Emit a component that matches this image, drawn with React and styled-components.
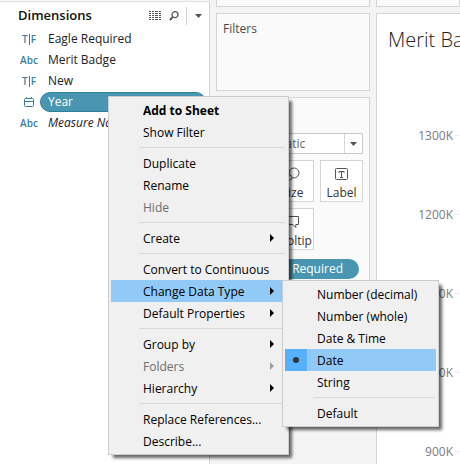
import React from 'react';
import styled, { createGlobalStyle, css } from 'styled-components';

const GlobalStyle = createGlobalStyle`
  * { box-sizing: border-box; }
  body {
    margin: 0;
    background: #f4f4f4;
    color: #333;
    font-family: "Open Sans", "Noto Sans", sans-serif;
    font-size: 12px;
  }
  button, select { font: inherit; color: inherit; }
`;

const Workspace = styled.div`
  position: relative;
  display: grid;
  grid-template-columns: 210px 154px minmax(0, 1fr);
  column-gap: 6px;
  min-height: 100vh;
  overflow: hidden;
`;

const DataPane = styled.aside`
  margin-top: 1px;
  background: #fff;
  border-top: 1px solid #e0e0e0;
  border-right: 1px solid #d4d4d4;
`;

const PaneHeader = styled.header`
  display: flex;
  align-items: center;
  height: 27px;
  padding: 0 7px 0 18px;
`;

const PaneTitle = styled.h2`
  flex: 1;
  margin: 0;
  padding-bottom: 2px;
  font: 600 13px/20px "Open Sans", sans-serif;
  color: #111;
`;

const ToolButton = styled.button`
  display: flex;
  padding: 0;
  border: 0;
  background: none;
  margin-left: ${(p) => p.$gap || 0}px;
`;

const ToolDivider = styled.span`
  width: 1px;
  height: 18px;
  margin-left: 7px;
  background: #d4d4d4;
`;

const FieldList = styled.ul`
  margin: 0;
  padding: 0;
  list-style: none;
`;

const FieldRow = styled.li`
  display: flex;
  align-items: flex-start;
  height: 21px;
  padding-right: 3px;
`;

const TypeMark = styled.span`
  flex: none;
  display: flex;
  align-items: center;
  justify-content: center;
  width: 40px;
  height: 20px;
  padding-left: 18px;
  font: 600 10px/20px "Open Sans", sans-serif;
  color: #3c7f9c;
`;

const TypeBar = styled.span`
  width: 1px;
  height: 11px;
  margin: 0 1px;
  background: #3c7f9c;
`;

const FieldName = styled.button`
  flex: 1;
  height: 20px;
  padding: 0 7px 1px;
  border: 1px solid transparent;
  border-radius: 10px;
  background: none;
  color: #222;
  line-height: 17px;
  text-align: left;
  white-space: nowrap;
  font-style: ${(p) => (p.$italic ? 'italic' : 'normal')};
  ${(p) => p.$selected && css`
    background: #4996b2;
    border-color: #2f7f9f;
    color: #fff;
  `}
`;

const ShelfColumn = styled.div`
  display: flex;
  flex-direction: column;
  gap: 6px;
`;

const Shelf = styled.section`
  height: 78px;
  padding: 4px 6px;
  border: 1px solid #d4d4d4;
  background: #fafafa;
`;

const ShelfEdge = styled.section`
  height: 7px;
  border: 1px solid #d4d4d4;
  border-top: 0;
  background: #fafafa;
`;

const ShelfTitle = styled.h3`
  margin: 0;
  font: 400 12px/22px "Open Sans", sans-serif;
  color: #4a4a4a;
`;

const MarksCard = styled.section`
  height: 300px;
  padding: 4px 6px 4px 5px;
  border: 1px solid #d4d4d4;
  background: #fafafa;
`;

const MarkType = styled.div`
  display: flex;
  align-items: center;
  height: 21px;
  margin-top: 9px;
  border: 1px solid #c8c8c8;
  border-radius: 1px;
  background: #fff;
`;

const MarkSelect = styled.select`
  flex: 1;
  min-width: 0;
  height: 19px;
  padding: 0 0 0 25px;
  border: 0;
  appearance: none;
  background: none;
  color: #666;
`;

const MarkArrow = styled.span`
  display: flex;
  align-items: center;
  justify-content: center;
  width: 18px;
  height: 19px;
  border-left: 1px solid #d9d9d9;
`;

const MarkGrid = styled.div`
  display: grid;
  grid-template-columns: repeat(3, 1fr);
  gap: 6px;
  margin-top: 6px;
`;

const MarkButton = styled.button`
  display: flex;
  flex-direction: column;
  align-items: center;
  justify-content: space-between;
  height: 42px;
  padding: 6px 0 0;
  border: 1px solid #d4d4d4;
  background: #fff;
  line-height: 16px;
  color: #333;
`;

const MarkPill = styled.button`
  display: block;
  width: 137px;
  height: 20px;
  margin-top: 9px;
  padding: 0 16px;
  border: 0;
  border-radius: 10px;
  background: #4996b2;
  color: #fff;
  line-height: 20px;
  text-align: right;
  white-space: nowrap;
`;

const SheetColumn = styled.main`
  display: flex;
  flex-direction: column;
  gap: 6px;
`;

const Sheet = styled.section`
  flex: 1;
  border: 1px solid #d4d4d4;
  border-width: 1px 0 0 1px;
  background: #fff;
  overflow: hidden;
`;

const SheetTitle = styled.h1`
  margin: 0;
  padding: 11px 0 0 11px;
  font: 300 20px/30px "Open Sans", sans-serif;
  color: #222;
  white-space: nowrap;
`;

const Axis = styled.div`
  display: flex;
  flex-direction: column;
  gap: 57px;
  margin-top: 69px;
`;

const Tick = styled.div`
  display: flex;
  align-items: center;
  height: 22px;
  color: #7b7b7b;

  span {
    width: 76px;
    text-align: right;
  }

  &::after {
    content: "";
    flex: 1;
    height: 1px;
    margin-left: 2px;
    background: #ececec;
  }
`;

const Menu = styled.div`
  position: absolute;
  left: ${(p) => p.$x}px;
  top: ${(p) => p.$y}px;
  width: ${(p) => p.$width}px;
  padding: 2px;
  border: 1px solid #ccc;
  background: #f0f0f0;
  box-shadow: 4px 4px 3px -1px rgba(0, 0, 0, 0.6);
`;

const MenuItem = styled.button`
  display: flex;
  align-items: center;
  width: 100%;
  height: 22px;
  padding: 0 12px 0 0;
  border: 0;
  background: ${(p) => (p.$active ? '#91c9f7' : 'none')};
  color: #000;
  font-size: 12px;
  font-weight: ${(p) => (p.$bold ? 700 : 400)};
  line-height: 20px;
  text-align: left;
  white-space: nowrap;

  &:disabled { color: #6d6d6d; }
  &:disabled svg { color: #a0a0a0; }
`;

const MenuLabel = styled.span`
  flex: 1;
  padding: 2px 0 0 ${(p) => p.$indent}px;
`;

const RadioGutter = styled.span`
  display: flex;
  align-items: center;
  justify-content: center;
  width: 22px;
  height: 22px;
  background: ${(p) => (p.$checked ? '#56b0fa' : 'none')};
`;

const MenuRule = styled.hr`
  height: 1px;
  margin: 4px 1px 4px 28px;
  border: 0;
  background: #d7d7d7;
`;

const ListIcon = () => (
  <svg width="12" height="9" viewBox="0 0 12 9" stroke="#555" shapeRendering="crispEdges" aria-hidden="true">
    {[0.5, 2.5, 4.5, 6.5, 8.5].map((y) => (
      <path key={y} d={`M0 ${y}h2M3 ${y}h2M6 ${y}h3M10 ${y}h2`} />
    ))}
  </svg>
);

const SearchIcon = () => (
  <svg width="10" height="10" viewBox="0 0 10 10" fill="none" stroke="#555" aria-hidden="true">
    <circle cx="6" cy="3.7" r="3" strokeWidth="1.2" />
    <path d="M3.8 6 .8 9" strokeWidth="1.8" />
  </svg>
);

const DownArrow = () => (
  <svg width="7" height="4" viewBox="0 0 7 4" fill="#555" aria-hidden="true"><path d="M0 0h7L3.5 4z" /></svg>
);

const SubmenuArrow = () => (
  <svg width="4" height="8" viewBox="0 0 4 8" fill="currentColor" aria-hidden="true"><path d="M0 0 4 4 0 8z" /></svg>
);

const CalendarIcon = () => (
  <svg width="10" height="10" viewBox="0 0 10 10" fill="none" stroke="#3c7f9c" aria-hidden="true">
    <rect x=".5" y="1.5" width="9" height="8" rx="1" />
    <path d="M0 4.5h10M2.5 0v2M7.5 0v2" />
  </svg>
);

const Dot = () => (
  <svg width="6" height="6" viewBox="0 0 6 6" fill="#333" aria-hidden="true"><circle cx="3" cy="3" r="3" /></svg>
);

const markIcons = {
  Color: (
    <g fill="#777" stroke="none">
      <circle cx="4" cy="4" r="2.5" /><circle cx="10" cy="4" r="2.5" />
      <circle cx="4" cy="10" r="2.5" /><circle cx="10" cy="10" r="2.5" />
    </g>
  ),
  Size: (
    <g>
      <circle cx="8" cy="6" r="5" />
      <circle cx="3.5" cy="10.5" r="2.5" fill="#fff" />
    </g>
  ),
  Label: (
    <g>
      <rect x=".5" y="1.5" width="12" height="11" rx="1" />
      <path d="M4 6V4.5h5V6M6.5 4.5v6M5 10.5h3" />
    </g>
  ),
  Detail: (
    <g>
      <circle cx="4" cy="4" r="2.5" /><circle cx="10" cy="4" r="2.5" />
      <circle cx="7" cy="10" r="2.5" />
    </g>
  ),
  Tooltip: <path d="M.5 1.5h12v8H9.8v3l-3-3H.5z" />,
};

const MarkIcon = ({ name }) => (
  <svg width="14" height="14" viewBox="0 0 14 14" fill="none" stroke="#555" aria-hidden="true">{markIcons[name]}</svg>
);

const BooleanMark = () => <>T<TypeBar />F</>;

const fields = [
  { name: 'Eagle Required', mark: <BooleanMark /> },
  { name: 'Merit Badge', mark: 'Abc' },
  { name: 'New', mark: <BooleanMark /> },
  { name: 'Year', mark: <CalendarIcon />, selected: true },
  { name: 'Measure Names', mark: 'Abc', italic: true },
];

const actions = [
  { label: 'Add to Sheet', bold: true },
  { label: 'Show Filter' },
  null,
  { label: 'Duplicate' },
  { label: 'Rename' },
  { label: 'Hide', disabled: true },
  null,
  { label: 'Create', more: true },
  null,
  { label: 'Convert to Continuous' },
  { label: 'Change Data Type', more: true, active: true },
  { label: 'Default Properties', more: true },
  null,
  { label: 'Group by', more: true },
  { label: 'Folders', more: true, disabled: true },
  { label: 'Hierarchy', more: true },
  null,
  { label: 'Replace References...' },
  { label: 'Describe...' },
];

const dataTypes = ['Number (decimal)', 'Number (whole)', 'Date & Time', 'Date', 'String', null, 'Default'];
const currentType = 'Date';

export default function App() {
  return (
    <>
      <GlobalStyle />
      <Workspace>
        <DataPane>
          <PaneHeader>
            <PaneTitle>Dimensions</PaneTitle>
            <ToolButton aria-label="View as list"><ListIcon /></ToolButton>
            <ToolButton aria-label="Find field" $gap={8}><SearchIcon /></ToolButton>
            <ToolDivider />
            <ToolButton aria-label="Pane menu" $gap={8}><DownArrow /></ToolButton>
          </PaneHeader>
          <FieldList>
            {fields.map((f) => (
              <FieldRow key={f.name}>
                <TypeMark>{f.mark}</TypeMark>
                <FieldName $selected={f.selected} $italic={f.italic}>{f.name}</FieldName>
              </FieldRow>
            ))}
          </FieldList>
        </DataPane>

        <ShelfColumn>
          <ShelfEdge aria-label="Pages" />
          <Shelf><ShelfTitle>Filters</ShelfTitle></Shelf>
          <MarksCard>
            <ShelfTitle>Marks</ShelfTitle>
            <MarkType>
              <MarkSelect aria-label="Mark type" defaultValue="Automatic">
                <option>Automatic</option>
              </MarkSelect>
              <MarkArrow><DownArrow /></MarkArrow>
            </MarkType>
            <MarkGrid>
              {Object.keys(markIcons).map((name) => (
                <MarkButton key={name}><MarkIcon name={name} />{name}</MarkButton>
              ))}
            </MarkGrid>
            <MarkPill>Eagle Required</MarkPill>
          </MarksCard>
        </ShelfColumn>

        <SheetColumn>
          <ShelfEdge aria-label="Rows" />
          <Sheet>
            <SheetTitle>Merit Badges</SheetTitle>
            <Axis>
              {['1300K', '1200K', '1100K', '1000K', '900K'].map((v) => (
                <Tick key={v}><span>{v}</span></Tick>
              ))}
            </Axis>
          </Sheet>
        </SheetColumn>

        <Menu role="menu" aria-label="Year" $x={108} $y={96} $width={181}>
          {actions.map((a, i) => a ? (
            <MenuItem key={a.label} role="menuitem" disabled={a.disabled} $bold={a.bold} $active={a.active}>
              <MenuLabel $indent={32}>{a.label}</MenuLabel>
              {a.more && <SubmenuArrow />}
            </MenuItem>
          ) : <MenuRule key={i} />)}
        </Menu>

        <Menu role="menu" aria-label="Change Data Type" $x={282} $y={280} $width={157}>
          {dataTypes.map((t, i) => t ? (
            <MenuItem key={t} role="menuitemradio" aria-checked={t === currentType} $active={t === currentType}>
              <RadioGutter $checked={t === currentType}>{t === currentType && <Dot />}</RadioGutter>
              <MenuLabel $indent={10}>{t}</MenuLabel>
            </MenuItem>
          ) : <MenuRule key={i} />)}
        </Menu>
      </Workspace>
    </>
  );
}
